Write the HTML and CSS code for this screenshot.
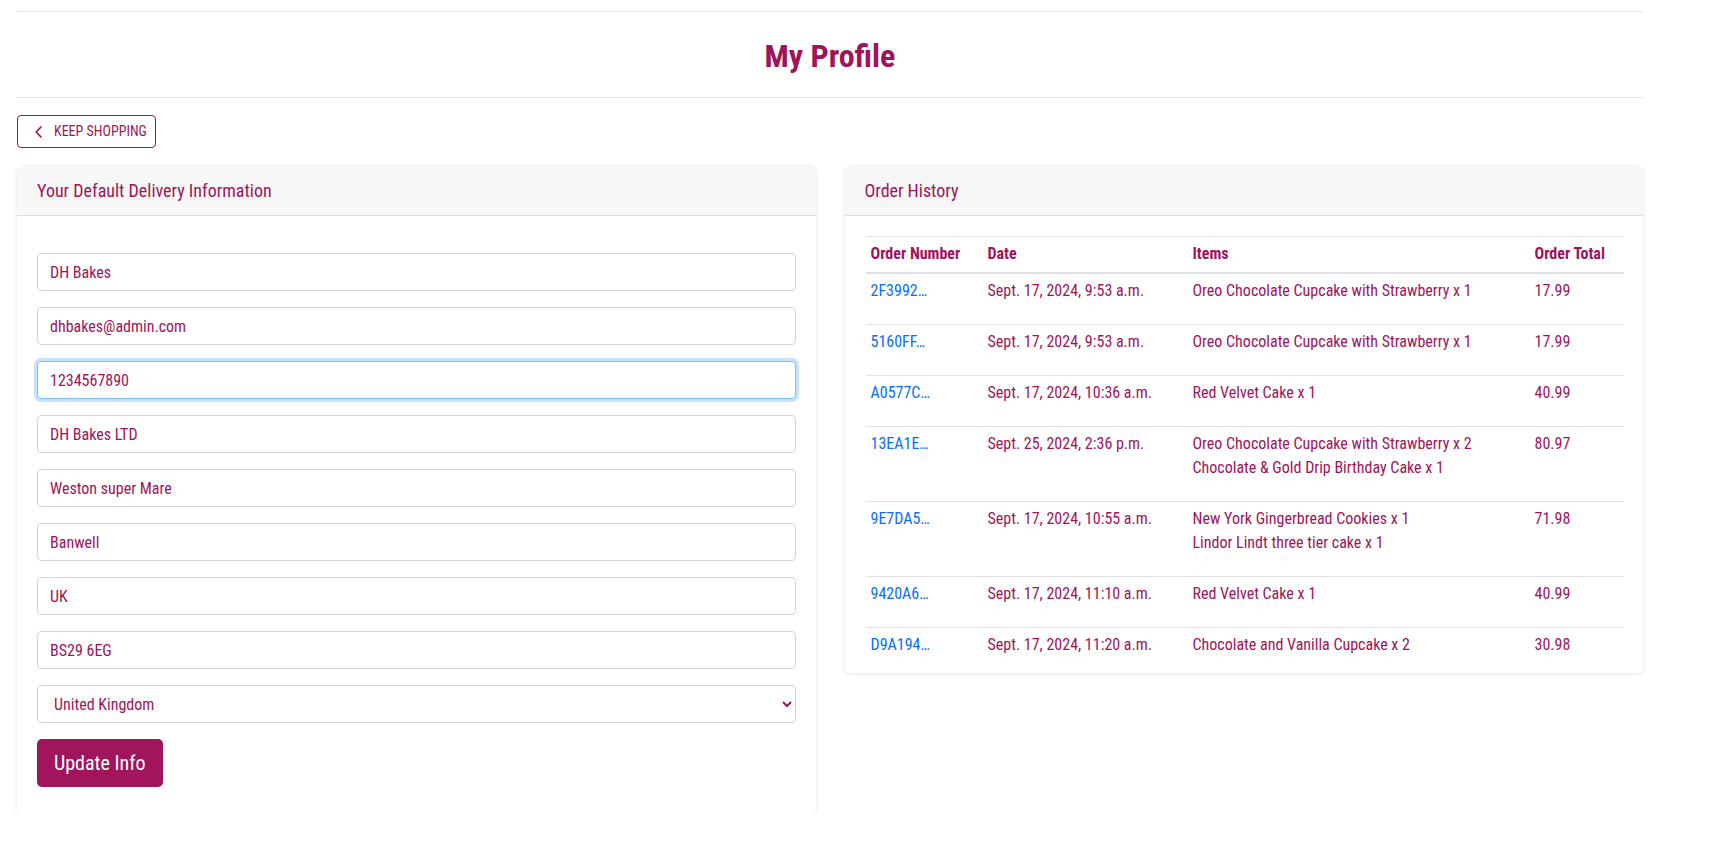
FILE: index.html
```html
<!DOCTYPE html>
<html lang="en">
<head>
<meta charset="utf-8">
<title>My Profile</title>
<link rel="stylesheet" href="styles.css">
</head>
<body>
<div class="page">
  <header class="head">
    <h1 class="title">My Profile</h1>
  </header>

  <div class="toolbar">
    <a class="btn-outline" href="#">
      <svg class="chev" width="7" height="12" viewBox="0 0 7 12" aria-hidden="true"><polyline points="6,1 1.2,6 6,11" fill="none" stroke="currentColor" stroke-width="1.7" stroke-linecap="round" stroke-linejoin="round"/></svg>
      <span>Keep Shopping</span>
    </a>
  </div>

  <div class="grid">
    <section class="card">
      <div class="card-header">Your Default Delivery Information</div>
      <div class="card-body form-body">
        <form class="form">
          <input class="field" type="text" value="DH Bakes">
          <input class="field" type="text" value="dhbakes@admin.com">
          <input class="field is-focused" type="text" value="1234567890">
          <input class="field" type="text" value="DH Bakes LTD">
          <input class="field" type="text" value="Weston super Mare">
          <input class="field" type="text" value="Banwell">
          <input class="field" type="text" value="UK">
          <input class="field" type="text" value="BS29 6EG">
          <select class="field select"><option>United Kingdom</option></select>
          <button class="btn-primary" type="button">Update Info</button>
        </form>
      </div>
    </section>

    <section class="card">
      <div class="card-header">Order History</div>
      <div class="card-body orders-body">
        <table class="orders">
          <colgroup>
            <col class="c-num"><col class="c-date"><col class="c-items"><col class="c-total">
          </colgroup>
          <thead>
            <tr><th>Order Number</th><th>Date</th><th>Items</th><th>Order Total</th></tr>
          </thead>
          <tbody>
            <tr><td><a class="link" href="#">2F3992…</a></td><td>Sept. 17, 2024, 9:53 a.m.</td><td><div>Oreo Chocolate Cupcake with Strawberry x 1</div></td><td>17.99</td></tr>
            <tr><td><a class="link" href="#">5160FF…</a></td><td>Sept. 17, 2024, 9:53 a.m.</td><td><div>Oreo Chocolate Cupcake with Strawberry x 1</div></td><td>17.99</td></tr>
            <tr><td><a class="link" href="#">A0577C…</a></td><td>Sept. 17, 2024, 10:36 a.m.</td><td><div>Red Velvet Cake x 1</div></td><td>40.99</td></tr>
            <tr><td><a class="link" href="#">13EA1E…</a></td><td>Sept. 25, 2024, 2:36 p.m.</td><td><div>Oreo Chocolate Cupcake with Strawberry x 2</div><div>Chocolate &amp; Gold Drip Birthday Cake x 1</div></td><td>80.97</td></tr>
            <tr><td><a class="link" href="#">9E7DA5…</a></td><td>Sept. 17, 2024, 10:55 a.m.</td><td><div>New York Gingerbread Cookies x 1</div><div>Lindor Lindt three tier cake x 1</div></td><td>71.98</td></tr>
            <tr><td><a class="link" href="#">9420A6…</a></td><td>Sept. 17, 2024, 11:10 a.m.</td><td><div>Red Velvet Cake x 1</div></td><td>40.99</td></tr>
            <tr><td><a class="link" href="#">D9A194…</a></td><td>Sept. 17, 2024, 11:20 a.m.</td><td><div>Chocolate and Vanilla Cupcake x 2</div></td><td>30.98</td></tr>
          </tbody>
        </table>
      </div>
    </section>
  </div>
</div>
</body>
</html>
```

FILE: styles.css
```css
* { box-sizing: border-box; }

body {
  margin: 0;
  background: #fff;
  color: #9e1459;
  font-family: Roboto, "Liberation Sans Narrow", sans-serif;
  font-stretch: 87.5%;
  font-size: 16px;
  line-height: 1.5;
}

.page {
  width: 1643px;
  padding: 11px 0 0 17px;
}

.head {
  border-top: 1px solid #e4e4e4;
  border-bottom: 1px solid #e4e4e4;
  padding: 25px 0 22px;
  text-align: center;
}

.title {
  margin: 0;
  font-size: 32px;
  line-height: 38px;
  font-weight: 700;
}

.toolbar {
  margin-top: 17px;
  display: flex;
}

.btn-outline {
  display: inline-flex;
  align-items: center;
  gap: 12px;
  height: 33px;
  padding: 0 8px 0 17px;
  border: 1px solid #9e1459;
  border-radius: 4px;
  color: #9e1459;
  text-decoration: none;
  font-size: 14px;
  line-height: 21px;
  text-transform: uppercase;
}

.chev { display: block; }

.grid {
  display: grid;
  grid-template-columns: 1fr 1fr;
  gap: 29px;
  margin-top: 18px;
  align-items: start;
}

.card {
  background: #fff;
  border-radius: 5px;
  box-shadow: 0 1px 5px rgba(0, 0, 0, 0.1);
  overflow: hidden;
}

.card-header {
  background: #f7f7f7;
  border-bottom: 1px solid #dcdcdc;
  padding: 13px 20px 12px;
  font-size: 18px;
  line-height: 24px;
}

.card-body { padding: 20px; }

.form-body { padding-bottom: 27px; }

.form {
  margin: 17px 0 0;
  display: flex;
  flex-direction: column;
  align-items: flex-start;
  gap: 16px;
}

.field {
  width: 100%;
  height: 38px;
  margin: 0;
  padding: 6px 12px;
  border: 1px solid #ced4da;
  border-radius: 4px;
  background-color: #fff;
  color: #9e1459;
  font: inherit;
  font-size: 16px;
  line-height: 24px;
  outline: none;
}

.field.is-focused {
  border-color: #80bdff;
  box-shadow: 0 0 0 3px rgba(0, 123, 255, 0.22);
}

.select { padding: 6px 8px 6px 12px; }

.btn-primary {
  margin: 0;
  padding: 9px 17px;
  border: 0;
  border-radius: 5px;
  background: #a0155b;
  color: #fff;
  font: inherit;
  font-size: 20px;
  line-height: 30px;
}

.orders-body { padding: 20px 19px 12px 21px; }

.orders {
  width: 100%;
  border-collapse: collapse;
  table-layout: fixed;
}

.c-num { width: 117px; }
.c-date { width: 205px; }
.c-items { width: 342px; }

.orders th,
.orders td {
  padding: 5px;
  border-top: 1px solid #dee2e6;
  text-align: left;
  vertical-align: top;
  line-height: 24px;
}

.orders th {
  font-weight: 700;
  padding-bottom: 6px;
  border-bottom: 2px solid #dee2e6;
}

.orders td { padding-bottom: 21px; white-space: nowrap; }

.orders tbody tr:last-child td { padding-bottom: 4px; }

.link {
  color: #0a6ef5;
  text-decoration: none;
}
```
